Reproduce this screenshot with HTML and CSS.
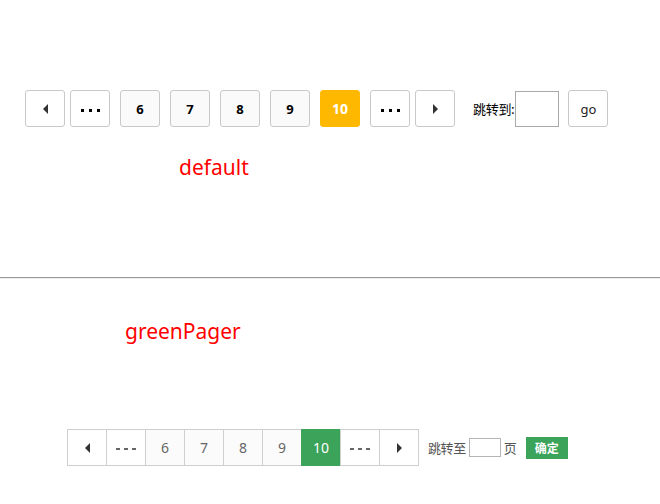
FILE: index.html
```html
<!DOCTYPE html>
<html lang="zh">
<head>
<meta charset="utf-8">
<link rel="stylesheet" href="styles.css">
</head>
<body>
<section class="demo demo-default">
  <div class="pager">
    <span class="pg-btn pg-nav"><i class="tri tri-left"></i></span>
    <span class="pg-btn pg-dots"><i></i><i></i><i></i></span>
    <span class="pg-btn pg-num pg-first">6</span>
    <span class="pg-btn pg-num">7</span>
    <span class="pg-btn pg-num">8</span>
    <span class="pg-btn pg-num">9</span>
    <span class="pg-btn pg-num pg-active">10</span>
    <span class="pg-btn pg-dots pg-dots-after"><i></i><i></i><i></i></span>
    <span class="pg-btn pg-nav pg-next"><i class="tri tri-right"></i></span>
    <span class="pg-label">跳转到:</span>
    <span class="pg-input"></span>
    <span class="pg-btn pg-go">go</span>
  </div>
  <div class="demo-title title-default">default</div>
</section>
<hr class="divider">
<section class="demo demo-green">
  <div class="demo-title title-green">greenPager</div>
  <div class="gpager">
    <span class="g-cell"><i class="tri tri-left"></i></span>
    <span class="g-cell g-dots"><i></i><i></i><i></i></span>
    <span class="g-cell g-num">6</span>
    <span class="g-cell g-num">7</span>
    <span class="g-cell g-num">8</span>
    <span class="g-cell g-num">9</span>
    <span class="g-cell g-active">10</span>
    <span class="g-cell g-dots"><i></i><i></i><i></i></span>
    <span class="g-cell"><i class="tri tri-right"></i></span>
    <span class="g-label">跳转至</span>
    <span class="g-input"></span>
    <span class="g-page">页</span>
    <span class="g-ok">确定</span>
  </div>
</section>
</body>
</html>
```
FILE: styles.css
```css
html, body {
  margin: 0;
  padding: 0;
  background: #fff;
}
body {
  font-family: "Noto Sans", "Noto Sans CJK SC", sans-serif;
  color: #000;
}

.demo-default {
  padding-top: 90px;
}

.pager {
  display: flex;
  align-items: center;
  padding-left: 25px;
  height: 37px;
}

.pg-btn {
  box-sizing: border-box;
  width: 40px;
  height: 37px;
  border: 1px solid #c9c9c9;
  border-radius: 3px;
  background: #fff;
  display: flex;
  align-items: center;
  justify-content: center;
  font-size: 13px;
  font-weight: bold;
  color: #000;
}
.pg-num {
  background: #fafafa;
  margin-left: 10px;
}
.pg-dots {
  margin-left: 5px;
  gap: 5px;
  padding-top: 4px;
}
.pg-dots i {
  display: block;
  width: 3px;
  height: 3px;
  background: #000;
}
.pg-dots-after {
  margin-left: 10px;
}
.pg-next {
  margin-left: 5px;
}
.pg-active {
  background: #ffb800;
  border-color: #ffb800;
  color: #fff;
  font-size: 14px;
}
.pg-label {
  margin-left: 18px;
  font-size: 13px;
  font-family: "Noto Sans CJK SC", sans-serif;
  letter-spacing: -0.3px;
  color: #000;
}
.pg-input {
  box-sizing: border-box;
  width: 44px;
  height: 36px;
  border: 1px solid #a9a9a9;
  margin-left: 1px;
  background: #fff;
}
.pg-go {
  margin-left: 9px;
  font-weight: normal;
  font-size: 13px;
  color: #222;
}

.tri {
  display: block;
  width: 0;
  height: 0;
  border-top: 5px solid transparent;
  border-bottom: 5px solid transparent;
}
.tri-left {
  border-right: 5px solid #333;
}
.tri-right {
  border-left: 5px solid #333;
}

.demo-title {
  font-size: 21px;
  line-height: 28px;
  color: #f00;
}
.title-default {
  margin-top: 26px;
  padding-left: 179px;
}

.divider {
  margin: 96px 0 0;
  height: 0;
  border: 0;
  border-top: 1px solid #9a9a9a;
  border-bottom: 1px solid #eee;
}

.title-green {
  margin-top: 38px;
  padding-left: 125px;
}

.gpager {
  display: flex;
  align-items: center;
  margin-top: 84px;
  padding-left: 68px;
  height: 37px;
}
.g-cell {
  box-sizing: border-box;
  width: 40px;
  height: 37px;
  margin-left: -1px;
  border: 1px solid #cfcfcf;
  background: #fff;
  display: flex;
  align-items: center;
  justify-content: center;
  font-size: 14px;
  color: #666;
}
.g-num {
  background: #fbfbfb;
}
.g-dots {
  gap: 4px;
  padding-top: 3px;
}
.g-dots i {
  display: block;
  width: 4px;
  height: 2px;
  background: #666;
}
.g-active {
  background: #3ca35a;
  border-color: #3ca35a;
  color: #fff;
}
.g-label {
  margin-left: 9px;
  font-family: "Noto Sans CJK SC", sans-serif;
  font-size: 13px;
  letter-spacing: -0.4px;
  color: #555;
}
.g-input {
  box-sizing: border-box;
  width: 32px;
  height: 19px;
  margin-left: 3px;
  border: 1px solid #b5b5b5;
  background: #fff;
}
.g-page {
  margin-left: 3px;
  font-family: "Noto Sans CJK SC", sans-serif;
  font-size: 13px;
  color: #555;
}
.g-ok {
  margin-left: 9px;
  width: 42px;
  height: 22px;
  background: #3ca35a;
  color: #fff;
  font-family: "Noto Sans CJK SC", sans-serif;
  font-size: 12px;
  font-weight: bold;
  display: flex;
  align-items: center;
  justify-content: center;
}
```
